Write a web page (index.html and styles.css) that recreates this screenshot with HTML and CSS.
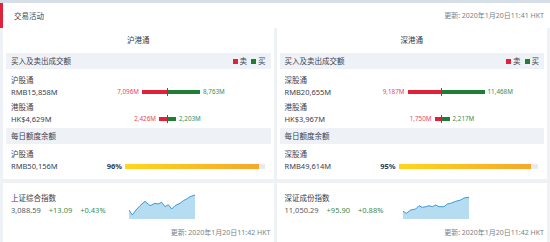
FILE: index.html
```html
<!DOCTYPE html>
<html lang="zh-CN">
<head>
    <meta charset="UTF-8">
    <meta name="viewport" content="width=device-width, initial-scale=1.0">
    <title>交易活动</title>
    <link rel="stylesheet" href="styles.css">
</head>
<body>
<div class="topbar"></div>

<div class="panel-head">
    <span class="panel-title">交易活动</span>
    <span class="stamp">更新: 2020年1月20日11:41 HKT</span>
</div>

<div class="columns">
    <div class="col">
        <div class="col-title">沪港通</div>
        <div class="sub-head">
            <span>买入及卖出成交额</span>
            <span class="legend"><i class="sq sq-sell"></i>卖<i class="sq sq-buy"></i>买</span>
        </div>
        <div class="flows">
            <div class="flow-row">
                <div class="name"><div>沪股通</div><div>RMB15,858M</div></div>
                <div class="sell"><span class="num-sell">7,096M</span><span class="bar bar-sell" style="width:25px"></span></div>
                <div class="buy"><span class="bar bar-buy" style="width:33px"></span><span class="num-buy">8,763M</span></div>
            </div>
            <div class="flow-row">
                <div class="name"><div>港股通</div><div>HK$4,629M</div></div>
                <div class="sell"><span class="num-sell">2,426M</span><span class="bar bar-sell" style="width:8px"></span></div>
                <div class="buy"><span class="bar bar-buy" style="width:9px"></span><span class="num-buy">2,203M</span></div>
            </div>
        </div>
        <div class="sub-head"><span>每日额度余额</span></div>
        <div class="quota-row">
            <div class="name"><div>沪股通</div><div>RMB50,156M</div></div>
            <div class="pct">96%</div>
            <div class="track"><div class="fill" style="width:96%"></div></div>
        </div>
    </div>

    <div class="col">
        <div class="col-title">深港通</div>
        <div class="sub-head">
            <span>买入及卖出成交额</span>
            <span class="legend"><i class="sq sq-sell"></i>卖<i class="sq sq-buy"></i>买</span>
        </div>
        <div class="flows">
            <div class="flow-row">
                <div class="name"><div>深股通</div><div>RMB20,655M</div></div>
                <div class="sell"><span class="num-sell">9,187M</span><span class="bar bar-sell" style="width:33px"></span></div>
                <div class="buy"><span class="bar bar-buy" style="width:44px"></span><span class="num-buy">11,468M</span></div>
            </div>
            <div class="flow-row">
                <div class="name"><div>港股通</div><div>HK$3,967M</div></div>
                <div class="sell"><span class="num-sell">1,750M</span><span class="bar bar-sell" style="width:6px"></span></div>
                <div class="buy"><span class="bar bar-buy" style="width:9px"></span><span class="num-buy">2,217M</span></div>
            </div>
        </div>
        <div class="sub-head"><span>每日额度余额</span></div>
        <div class="quota-row">
            <div class="name"><div>深股通</div><div>RMB49,614M</div></div>
            <div class="pct">95%</div>
            <div class="track"><div class="fill" style="width:95%"></div></div>
        </div>
    </div>
</div>

<div class="cards">
    <div class="card">
        <div class="card-main">
            <div class="index-info">
                <div class="index-name">上证综合指数</div>
                <div class="index-vals"><span class="last">3,088.59</span><span class="up">+13.09</span><span class="up">+0.43%</span></div>
            </div>
            <svg class="spark" width="66" height="25" viewBox="0 0 66 25">
                <polygon class="spark-fill" points="0,16 3.3,21 7,16 11,11.7 16,7.3 21,11.7 26,9.3 29,10 32.7,8.3 36,12.7 39.3,10.7 42.7,15 46,11.7 51,9.3 54.3,6.7 57.7,5 61,2.7 66,1 66,25 0,25"/>
                <polyline class="spark-line" points="0,16 3.3,21 7,16 11,11.7 16,7.3 21,11.7 26,9.3 29,10 32.7,8.3 36,12.7 39.3,10.7 42.7,15 46,11.7 51,9.3 54.3,6.7 57.7,5 61,2.7 66,1"/>
            </svg>
        </div>
        <div class="card-stamp">更新: 2020年1月20日11:42 HKT</div>
    </div>

    <div class="card">
        <div class="card-main">
            <div class="index-info">
                <div class="index-name">深证成份指数</div>
                <div class="index-vals"><span class="last">11,050.29</span><span class="up">+95.90</span><span class="up">+0.88%</span></div>
            </div>
            <svg class="spark" width="66" height="25" viewBox="0 0 66 25">
                <polygon class="spark-fill" points="0,17.3 3.3,19.3 7.7,16 12.7,15 16,11.7 19.3,13.3 22.7,12.7 26,11.7 29.3,12.7 32.7,11 36,12.7 41,12.7 44.3,10 47.7,9.3 52.7,7.3 57.7,6 61,4 66,3.3 66,25 0,25"/>
                <polyline class="spark-line" points="0,17.3 3.3,19.3 7.7,16 12.7,15 16,11.7 19.3,13.3 22.7,12.7 26,11.7 29.3,12.7 32.7,11 36,12.7 41,12.7 44.3,10 47.7,9.3 52.7,7.3 57.7,6 61,4 66,3.3"/>
            </svg>
        </div>
        <div class="card-stamp">更新: 2020年1月20日11:42 HKT</div>
    </div>
</div>
</body>
</html>
```

FILE: styles.css
```css
body {
    margin: 0;
    background-color: #eef1f5;
    font-family: "Noto Sans", "Noto Sans CJK SC", sans-serif;
    font-size: 7.5px;
    line-height: 12px;
    color: #3b4150;
}

.topbar {
    height: 3px;
    background-color: #d6dee7;
}

.panel-head {
    height: 25px;
    display: flex;
    justify-content: space-between;
    align-items: center;
    background-color: #ffffff;
    border-left: 3px solid #e0233d;
    padding: 0 6px 0 11px;
}

.panel-title {
    color: #444b55;
}

.stamp,
.card-stamp {
    color: #7a7f87;
    font-size: 7px;
}

.columns,
.cards {
    display: grid;
    grid-template-columns: 1fr 1fr;
    gap: 3px;
    padding: 0 3px;
}

.col {
    background-color: #ffffff;
    padding: 0 3px 7px 3px;
}

.col-title {
    height: 25px;
    line-height: 25px;
    text-align: center;
    color: #333a45;
}

.sub-head {
    height: 16px;
    display: flex;
    justify-content: space-between;
    align-items: center;
    background-color: #eef2f6;
    padding: 0 5px;
    color: #3b4150;
}

.legend {
    display: flex;
    align-items: center;
}

.sq {
    display: inline-block;
    width: 5px;
    height: 5px;
    margin: 0 2px 0 4px;
}

.sq-sell { background-color: #e2203a; }
.sq-buy { background-color: #1f7d36; }

.flows {
    padding: 5px 0 3px 0;
}

.flow-row {
    display: flex;
    align-items: flex-end;
    margin-bottom: 3px;
}

.flow-row:last-child {
    margin-bottom: 0;
}

.name {
    width: 80px;
    padding-left: 5px;
}

.sell {
    width: 76px;
    height: 12px;
    display: flex;
    justify-content: flex-end;
    align-items: center;
}

.buy {
    height: 12px;
    display: flex;
    align-items: center;
    position: relative;
}

.buy::before {
    content: "";
    position: absolute;
    left: 0;
    top: 2px;
    width: 1px;
    height: 8px;
    background-color: #555555;
}

.bar {
    display: inline-block;
    height: 4px;
}

.bar-sell { background-color: #e2203a; }
.bar-buy { background-color: #1f7d36; }

.num-sell {
    color: #e8495d;
    font-size: 6.3px;
    margin-right: 3px;
}

.num-buy {
    color: #3f8a4f;
    font-size: 6.3px;
    margin-left: 3px;
}

.quota-row {
    display: flex;
    align-items: flex-end;
    padding: 4px 6px 0 0;
}

.quota-row .name {
    width: 87px;
}

.pct {
    width: 24px;
    text-align: right;
    font-weight: bold;
    color: #2c3b55;
    margin-right: 3px;
}

.track {
    flex: 1;
    height: 5px;
    margin-bottom: 3px;
    background-color: #e8e9eb;
}

.fill {
    height: 100%;
    background: linear-gradient(to right, #ffd51f, #f6a72a);
}

.cards {
    margin-top: 4px;
}

.card {
    background-color: #ffffff;
    padding: 9px 3px 3px 8px;
}

.card-main {
    display: flex;
    align-items: flex-start;
}

.index-info {
    width: 118px;
}

.index-name {
    color: #333a45;
}

.index-vals span {
    margin-right: 8px;
}

.index-vals .last {
    color: #555b66;
}

.index-vals .up {
    color: #3f8a4f;
}

.spark {
    margin-top: 2px;
}

.spark-fill {
    fill: #b5dcf0;
}

.spark-line {
    fill: none;
    stroke: #3c9ad8;
    stroke-width: 1;
}

.card-stamp {
    text-align: right;
    margin-top: 8px;
}
```
